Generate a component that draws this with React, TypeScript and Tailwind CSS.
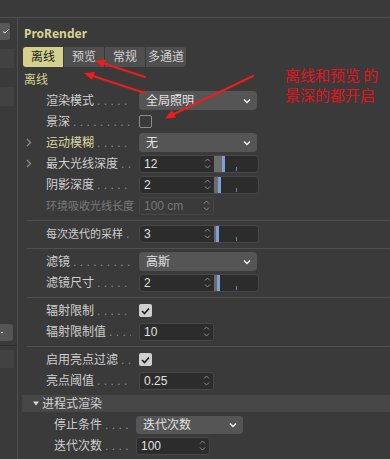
import React from "react";

const DOTS = "..............................";

function Spinner() {
  return (
    <svg width="7" height="13" viewBox="0 0 7 13" className="shrink-0">
      <path d="M1 4.5 L3.5 2 L6 4.5" fill="none" stroke="#8a8a8a" strokeWidth="1" />
      <path d="M1 8.5 L3.5 11 L6 8.5" fill="none" stroke="#8a8a8a" strokeWidth="1" />
    </svg>
  );
}

function Chevron() {
  return (
    <svg width="8" height="6" viewBox="0 0 8 6" className="shrink-0">
      <path d="M1 1.5 L4 4.5 L7 1.5" fill="none" stroke="#f0f0f0" strokeWidth="1.4" />
    </svg>
  );
}

function Row({
  label,
  arrow,
  yellow,
  disabled,
  small,
  group,
  noDots,
  children,
}: {
  label: string;
  arrow?: boolean;
  yellow?: boolean;
  disabled?: boolean;
  small?: boolean;
  group?: boolean;
  noDots?: boolean;
  children?: React.ReactNode;
}) {
  const color = disabled ? "text-[#7a7a7a]" : yellow ? "text-[#d9d6a0]" : "text-[#cfcfcf]";
  return (
    <div className="flex h-[21px] items-center">
      <div className={`${group ? "w-[31px]" : "w-[23px]"} flex items-center pl-[3px]`}>
        {arrow && (
          <svg width="6" height="9" viewBox="0 0 6 9">
            <path d="M1 1 L4.5 4.5 L1 8" fill="none" stroke="#8a8a8a" strokeWidth="1.3" />
          </svg>
        )}
      </div>
      <div className={`flex ${group ? "w-[82px]" : "w-[93px]"} items-baseline pr-[8px] leading-[16px]`}>
        <span className={`whitespace-nowrap ${small ? "text-[11px]" : "text-[12px]"} ${color}`}>{label}</span>
        {!noDots && (
          <span className="ml-[3px] min-w-0 flex-1 overflow-hidden whitespace-nowrap text-[12px] tracking-[3.4px] text-[#8a8a8a]">
            {DOTS}
          </span>
        )}
      </div>
      {children}
    </div>
  );
}

function Dropdown({ value, w = "w-[118px]", h = "h-[19px]" }: { value: string; w?: string; h?: string }) {
  return (
    <div className={`flex ${w} ${h} items-center justify-between rounded-[4px] bg-[#555555] pl-[7px] pr-[6px] text-[12px] text-[#e2e2e2]`}>
      <span>{value}</span>
      <Chevron />
    </div>
  );
}

function SliderField({ value, fill }: { value: string; fill: string }) {
  return (
    <div className="flex h-[18px] w-[120px] overflow-hidden rounded-[4px] border border-[#474747] bg-[#2c2c2c]">
      <div className="flex w-[74px] items-center justify-between pl-[4px] pr-[3px] text-[12px] text-[#e0e0e0]">
        <span>{value}</span>
        <Spinner />
      </div>
      <div className="relative flex flex-1">
        <div className={`${fill} h-full bg-[#6c6c6c]`} />
        <div className="h-full w-[3px] bg-[#7c9fd6]" />
        <div className="absolute bottom-[1px] left-[22px] h-[4px] w-px bg-[#6483b8]" />
      </div>
    </div>
  );
}

function Field({ value, disabled, w = "w-[75px]", h = "h-[18px]" }: { value: string; disabled?: boolean; w?: string; h?: string }) {
  return (
    <div
      className={`flex ${w} ${h} items-center justify-between rounded-[3px] border pl-[4px] pr-[3px] text-[12px] ${
        disabled ? "border-[#464646] bg-[#3a3a3a] text-[#777777]" : "border-[#474747] bg-[#2c2c2c] text-[#e0e0e0]"
      }`}
    >
      <span>{value}</span>
      <Spinner />
    </div>
  );
}

function Check({ checked }: { checked?: boolean }) {
  return checked ? (
    <div className="flex h-[13px] w-[13px] items-center justify-center rounded-[2px] bg-[#cfcfcf]">
      <svg width="9" height="8" viewBox="0 0 9 8">
        <path d="M1 4 L3.5 6.5 L8 1.5" fill="none" stroke="#1e1e1e" strokeWidth="1.6" />
      </svg>
    </div>
  ) : (
    <div className="h-[13px] w-[13px] rounded-[2px] border border-[#8c8c8c]" />
  );
}

function Sep() {
  return <div className="mb-[2px] ml-[4px] mr-[-5px] mt-[4px] h-px bg-[#4f4f4f]" />;
}

export default function App() {
  return (
    <div className="relative h-[459px] w-[390px] overflow-hidden bg-[#3a3a3a] font-['Liberation_Sans','Noto_Sans_CJK_SC',sans-serif]">
      <div className="h-[18px] border-b border-[#4e4e4e]" />
      <div className="flex">
        {/* left strip */}
        <div className="flex h-[441px] w-[18px] shrink-0 flex-col border-r border-[#4d4d4d]">
          <div className="mt-[5px] flex h-[17px] w-[10px] items-center justify-end rounded-r-[3px] bg-[#585858] pr-[1px]">
            <svg width="6" height="5" viewBox="0 0 6 5">
              <path d="M0 2.5 L2 4 L5.5 0.5" fill="none" stroke="#e8e8e8" strokeWidth="1" />
            </svg>
          </div>
          <div className="mt-[9px] h-[19px] w-[14px] bg-[#424242]" />
          <div className="mt-[19px] h-[19px] w-[14px] bg-[#424242]" />
          <div className="mt-[218px] flex h-[17px] w-[13px] items-center rounded-r-[3px] bg-[#555555]">
            <div className="ml-[1px] h-px w-[2px] bg-[#dddddd]" />
          </div>
          <div className="mt-[4px] h-px w-full bg-[#2f2f2f]" />
          <div className="mt-[4px] h-[18px] w-[14px] bg-[#424242]" />
        </div>

        {/* main */}
        <div className="min-w-0 flex-1 px-[5px]">
          <div className="mt-[8px] pl-[1px] font-['Noto_Sans',sans-serif] text-[12px] font-bold leading-[16px] text-[#d6d392]">
            ProRender
          </div>
          <div className="mt-[5px] flex gap-px">
            <div className="flex h-[20px] w-[40px] items-center justify-center rounded-l-[3px] bg-[#d4d18d] text-[12px] text-[#1c1c1c]">
              离线
            </div>
            <div className="flex h-[20px] w-[40px] items-center justify-center bg-[#4f4f4f] text-[12px] text-[#d2d2d2]">
              预览
            </div>
            <div className="flex h-[20px] w-[40px] items-center justify-center bg-[#4f4f4f] text-[12px] text-[#d2d2d2]">
              常规
            </div>
            <div className="flex h-[20px] w-[40px] items-center justify-center rounded-r-[3px] bg-[#4f4f4f] text-[12px] text-[#d2d2d2]">
              多通道
            </div>
          </div>
          <div className="mt-[5px] pl-[1px] text-[12px] leading-[16px] text-[#d6d392]">离线</div>

          <div className="mt-[2px]">
            <Row label="渲染模式">
              <Dropdown value="全局照明" />
            </Row>
            <Row label="景深">
              <Check />
            </Row>
            <Row label="运动模糊" arrow yellow>
              <Dropdown value="无" />
            </Row>
            <Row label="最大光线深度" arrow>
              <SliderField value="12" fill="w-[8px]" />
            </Row>
            <Row label="阴影深度">
              <SliderField value="2" fill="w-[4px]" />
            </Row>
            <Row label="环境吸收光线长度" disabled small noDots>
              <Field value="100 cm" disabled />
            </Row>
          </div>
          <Sep />
          <Row label="每次迭代的采样" small>
            <SliderField value="3" fill="w-[2px]" />
          </Row>
          <Sep />
          <Row label="滤镜">
            <Dropdown value="高斯" />
          </Row>
          <Row label="滤镜尺寸">
            <SliderField value="2" fill="w-[3px]" />
          </Row>
          <Sep />
          <Row label="辐射限制">
            <Check checked />
          </Row>
          <Row label="辐射限制值">
            <Field value="10" />
          </Row>
          <Sep />
          <Row label="启用亮点过滤">
            <Check checked />
          </Row>
          <Row label="亮点阈值">
            <Field value="0.25" />
          </Row>
          <div className="ml-[-1px] mr-[-5px] mt-[4px] flex h-[17px] items-center bg-[#474747] pl-[11px] text-[12px] text-[#d2d2d2]">
            <svg width="6" height="5" viewBox="0 0 6 5" className="mr-[3px]">
              <path d="M0 0.5 L6 0.5 L3 4.5 Z" fill="#d8d8d8" />
            </svg>
            进程式渲染
          </div>
          <div className="mt-[2px]">
            <Row label="停止条件" group>
              <Dropdown value="迭代次数" w="w-[107px]" h="h-[18px]" />
            </Row>
            <Row label="迭代次数" group>
              <Field value="100" w="w-[74px]" h="h-[18px]" />
            </Row>
          </div>
        </div>
      </div>

      {/* annotation overlay */}
      <div className="pointer-events-none absolute left-[285px] top-[65px] text-[15px] leading-[20px] text-[#e5141b] font-['Noto_Sans_CJK_SC',sans-serif]">
        离线和预览 的
        <br />
        景深的都开启
      </div>
      <svg className="pointer-events-none absolute left-0 top-0" width="390" height="459" viewBox="0 0 390 459">
        <g stroke="#ee1c1c" strokeWidth="2.2" fill="#ee1c1c" strokeLinecap="round">
          <line x1="145" y1="77" x2="104" y2="63.5" />
          <polygon points="95,60.5 106,59.5 103,67.5" stroke="none" />
          <line x1="145" y1="93" x2="93" y2="76" />
          <polygon points="84,73 95,72 92,80" stroke="none" />
          <line x1="253" y1="76" x2="174" y2="114" />
          <polygon points="165,118.5 172,110 176,117.5" stroke="none" />
        </g>
      </svg>
    </div>
  );
}
